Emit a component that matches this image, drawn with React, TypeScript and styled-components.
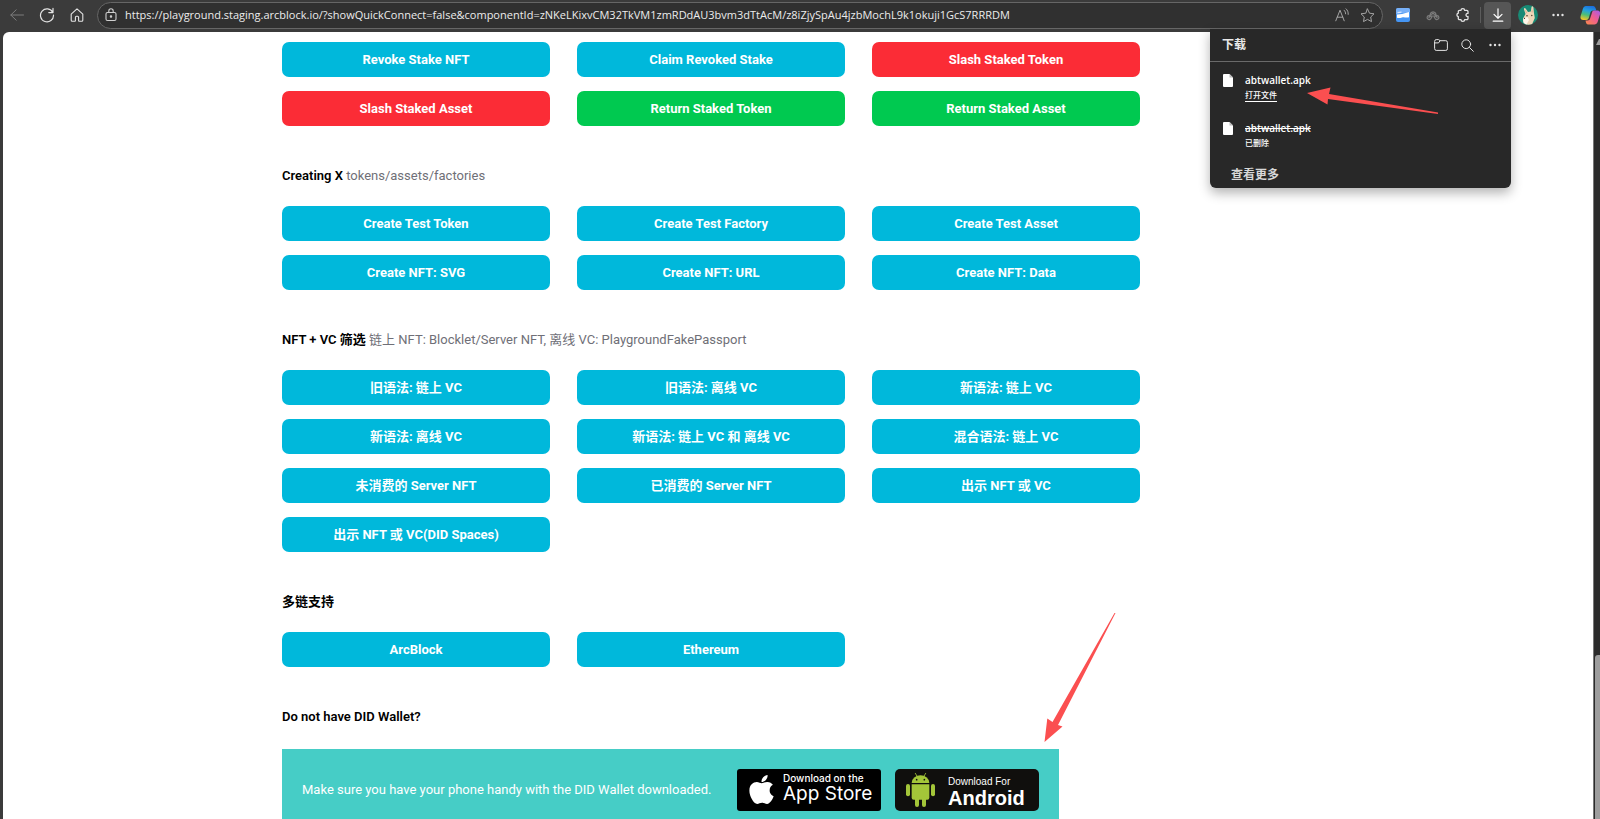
import React from "react";
import styled, { createGlobalStyle } from "styled-components";
import { FaApple } from "react-icons/fa";

const PageStyle = createGlobalStyle`
  *, *::before, *::after { box-sizing: border-box; }
  html, body { margin: 0; padding: 0; }
  body {
    font-family: Roboto, "Noto Sans CJK SC", sans-serif;
    font-size: 13px;
    background: #3b3b3b;
  }
  button, input { font-family: inherit; }
`;

const Browser = styled.div`
  position: relative;
  height: 100vh;
  display: flex;
  flex-direction: column;
  overflow: hidden;
  background: #3b3b3b;
`;

/* ---------- toolbar ---------- */

const Toolbar = styled.header`
  display: flex;
  align-items: center;
  flex: none;
  height: 32px;
  padding: 0 0 2px 2px;
`;

const ToolButton = styled.button<{ $dim?: boolean }>`
  flex: none;
  display: flex;
  align-items: center;
  justify-content: center;
  width: 30px;
  height: 28px;
  padding: 0;
  border: 0;
  background: none;
  color: ${(p) => (p.$dim ? "#7c7c7c" : "#e4e4e4")};
`;

const DownloadButton = styled(ToolButton)`
  width: 27px;
  height: 27px;
  margin: 0 2px 0 3px;
  border-radius: 4px;
  background: #565656;
  color: #fff;
`;

const EdgeButton = styled(ToolButton)`
  width: 27px;
  padding-left: 7px;
  justify-content: flex-start;
  overflow: hidden;
`;

const Separator = styled.span`
  flex: none;
  width: 1px;
  height: 16px;
  margin-left: 2px;
  background: #5c5c5c;
`;

const AddressBar = styled.div`
  flex: 1;
  min-width: 0;
  display: flex;
  align-items: center;
  height: 27px;
  margin: 0 5px;
  padding: 0 8px 0 6px;
  border: 1px solid #666;
  border-radius: 14px;
  background: #303030;
  color: #d0d0d0;
`;

const AddressIcon = styled.button`
  flex: none;
  display: flex;
  align-items: center;
  justify-content: center;
  width: 13px;
  height: 20px;
  padding: 0;
  border: 0;
  background: none;
  color: inherit;
`;

const AddressActions = styled.div`
  display: flex;
  gap: 13px;
  color: #a4a4a4;
`;

const AddressInput = styled.input`
  flex: 1;
  min-width: 0;
  margin: 0 8px;
  padding: 0;
  border: 0;
  outline: 0;
  background: none;
  color: #ececec;
  font-family: "Open Sans", sans-serif;
  font-size: 11px;
  line-height: 20px;
`;

/* ---------- page area ---------- */

const Frame = styled.div`
  flex: 1;
  min-height: 0;
  display: flex;
  padding-left: 3px;
`;

const Page = styled.main`
  flex: 1;
  min-width: 0;
  overflow: hidden;
  padding: 10px 24px 0 279px;
  border-top-left-radius: 6px;
  background: #fff;
`;

const Content = styled.div`
  max-width: 858px;
`;

const ScrollTrack = styled.div`
  flex: none;
  display: flex;
  flex-direction: column;
  align-items: flex-end;
  justify-content: space-between;
  width: 7px;
  padding-top: 7px;
  border-left: 1px solid #777;
  background: #2b2b2b;
`;

const ScrollThumb = styled.div`
  width: 5px;
  height: 21%;
  border-top-left-radius: 3px;
  background: #9d9d9d;
`;

const Heading = styled.h2`
  margin: 0;
  padding: 38px 0 18px;
  font-size: 13px;
  line-height: 24px;
  font-weight: 600;
  color: #000;
`;

const Hint = styled.span`
  font-weight: 400;
  color: #6f6f77;
`;

const ActionGrid = styled.div`
  display: grid;
  grid-template-columns: repeat(3, minmax(0, 1fr));
  gap: 14px 27px;
`;

type Tone = "cyan" | "red" | "green";
const tones: Record<Tone, string> = {
  cyan: "#00b8db",
  red: "#fb2c36",
  green: "#00c950",
};

const Action = styled.button<{ $tone: Tone }>`
  height: 35px;
  padding: 0 8px;
  border: 0;
  border-radius: 7px;
  background: ${(p) => tones[p.$tone]};
  color: #fff;
  font-size: 13px;
  line-height: 20px;
  font-weight: 700;
`;

const Banner = styled.div`
  display: flex;
  align-items: center;
  justify-content: space-between;
  max-width: 777px;
  height: 81px;
  margin-top: 2px;
  padding: 0 20px;
  background: #46cdc6;
  color: #fff;
  font-size: 13px;
  white-space: nowrap;
`;

const Stores = styled.div`
  display: flex;
  gap: 14px;
`;

const Badge = styled.a<{ $android?: boolean }>`
  display: flex;
  align-items: center;
  flex: none;
  width: 144px;
  height: 42px;
  padding-left: ${(p) => (p.$android ? 11 : 8)}px;
  border-radius: ${(p) => (p.$android ? 5 : 3)}px;
  background: ${(p) => (p.$android ? "#100f0d" : "#000")};
  color: #fff;
  text-decoration: none;
`;

const BadgeText = styled.span<{ $android?: boolean }>`
  display: flex;
  flex-direction: column;
  margin-left: ${(p) => (p.$android ? 13 : 5)}px;
  padding: ${(p) => (p.$android ? "4px 0 0" : "0 0 4px")};
  font-family: ${(p) => (p.$android ? '"Liberation Sans"' : "Inter")}, sans-serif;
  font-weight: ${(p) => (p.$android ? 400 : 500)};
  font-size: 10px;
  line-height: 12px;
`;

const BadgeName = styled.span<{ $android?: boolean }>`
  font-size: ${(p) => (p.$android ? 20 : 19)}px;
  line-height: 20px;
  font-weight: ${(p) => (p.$android ? 700 : 400)};
`;

/* ---------- downloads panel ---------- */

const Panel = styled.aside`
  position: absolute;
  top: 29px;
  right: 89px;
  width: 301px;
  border-radius: 0 0 6px 6px;
  background: #282828;
  color: #fff;
  box-shadow: 0 5px 12px rgba(0, 0, 0, 0.3);
  font-family: "Open Sans", "Noto Sans CJK SC", sans-serif;
`;

const PanelHeader = styled.div`
  display: flex;
  align-items: center;
  height: 33px;
  padding: 0 3px 0 12px;
  border-bottom: 1px solid #6a6a6a;
`;

const PanelTitle = styled.h3`
  flex: 1;
  margin: 0;
  font-size: 12px;
  line-height: 16px;
  font-weight: 700;
  color: #e8e8e8;
`;

const PanelTool = styled(ToolButton)`
  width: 27px;
`;

const Files = styled.ul`
  list-style: none;
  display: flex;
  flex-direction: column;
  gap: 20px;
  margin: 0;
  padding: 11px 0 0 13px;
`;

const File = styled.li`
  display: flex;
  gap: 12px;
  height: 28px;
`;

const FileName = styled.div<{ $gone?: boolean }>`
  font-size: 10px;
  line-height: 15px;
  font-weight: 600;
  text-decoration: ${(p) => (p.$gone ? "line-through" : "none")};
`;

const FileNote = styled.div`
  font-size: 8px;
  line-height: 13px;
  font-weight: 500;
`;

const OpenFile = styled.a`
  display: block;
  width: fit-content;
  border-bottom: 1px solid #fff;
  color: inherit;
  font-size: 8px;
  line-height: 13px;
  font-weight: 500;
  text-decoration: none;
`;

const FileGlyph = styled.svg`
  flex: none;
  margin-top: 1px;
`;

const SeeMore = styled.button`
  display: block;
  margin: 17px 0 0 21px;
  padding: 0 0 4px;
  border: 0;
  background: none;
  color: #d8d8d8;
  font-size: 12px;
  line-height: 18px;
  font-weight: 700;
`;

/* ---------- annotation arrows ---------- */

const Arrow = styled.svg<{ $x: number; $y: number }>`
  position: absolute;
  left: ${(p) => p.$x}px;
  top: ${(p) => p.$y}px;
  pointer-events: none;
  fill: #fb4f50;
`;

/* ---------- icons ---------- */

const Line = styled.svg`
  display: block;
  flex: none;
  fill: none;
  stroke: currentColor;
  stroke-linecap: round;
  stroke-linejoin: round;
`;

const BackIcon = () => (
  <Line width="14" height="14" viewBox="0 0 14 14"><path d="M13.5 7H.8M6.2 1.8L.8 7l5.4 5.2" /></Line>
);
const ReloadIcon = () => (
  <Line width="16" height="16" viewBox="0 0 16 16" strokeWidth="1.2">
    <path d="M13.8 5.4A6.5 6.5 0 1 0 14.5 8M14 1.4v4.2H9.8" />
  </Line>
);
const HomeIcon = () => (
  <Line width="14" height="14" viewBox="0 0 14 14" strokeWidth="1.1">
    <path d="M1.2 6.1L7 .9l5.8 5.2v6.1a1 1 0 0 1-1 1H9.2a.6.6 0 0 1-.6-.6V9.4c0-.7-.5-1.1-1.1-1.1h-1c-.6 0-1.1.4-1.1 1.1v3.2a.6.6 0 0 1-.6.6H2.2a1 1 0 0 1-1-1z" />
  </Line>
);
const LockIcon = () => (
  <Line width="12" height="14" viewBox="0 0 12 14" strokeWidth="1.1">
    <rect x="1" y="4.5" width="10" height="8" rx="1.5" />
    <path d="M3.8 4.3V3a2.2 2.2 0 0 1 4.4 0v1.3" />
    <circle cx="6" cy="8.5" r=".7" fill="currentColor" />
  </Line>
);
const ReadAloudIcon = () => (
  <Line width="14" height="14" viewBox="0 0 14 14">
    <path d="M.8 12.8L5 2.2l4.2 10.6M2.2 9.2h5.6M9 2.2c1.2 1 1.6 2.2 1.6 3.6M11 .8c1.7 1.5 2.3 3.2 2.2 5.6" />
  </Line>
);
const StarIcon = () => (
  <Line width="15" height="15" viewBox="0 0 15 15">
    <path d="M7.5 1l2 4.2 4.5.6-3.3 3.2.8 4.6-4-2.2-4 2.2.8-4.6L1 5.8l4.5-.6z" />
  </Line>
);
const CardIcon = () => (
  <svg width="14" height="14" viewBox="0 0 14 14">
    <rect width="14" height="14" rx="2" fill="#4595f3" />
    <path d="M0 2a2 2 0 0 1 2-2h10a2 2 0 0 1 2 2v2L0 6z" fill="#78b0f7" />
    <path d="M1 6.6l5-.6 7-2v5.2c-3 .8-5-.6-7 .2-2 .7-3.500.7-5 .4z" fill="#fff" />
    <path d="M1.500 4.600l4-.5" stroke="#d9e8ff" strokeWidth="1.2" />
  </svg>
);
const KnotIcon = () => (
  <Line width="14" height="11" viewBox="0 0 14 11" strokeWidth="1.2">
    <path d="M4.200 4.200A3 3 0 0 1 10 4.200M5.800 5.200a1.300 1.300 0 1 1 2.400 0" />
    <path d="M6.200 6.200L4.800 8.600a2 2 0 1 1-2.200-3c.9-.3 1.700 0 2.200.8M2.900 7.600l1.900-3.200" />
    <path d="M7.800 6.200l1.400 2.400a2 2 0 1 0 2.200-3c-.9-.3-1.700 0-2.200.8M11.100 7.600L9.200 4.400" />
  </Line>
);
const PuzzleIcon = () => (
  <Line width="14" height="14" viewBox="0 0 14 14" strokeWidth="1.3">
    <path d="M5 2.300a1.800 1.600 0 0 1 3.600 0h2.200a1.200 1.200 0 0 1 1.200 1.200v1.900a1.600 1.600 0 1 0 0 3.100v2a1.200 1.200 0 0 1-1.200 1.200H8.600a1.800 1.600 0 0 1-3.600 0H3.500a1.200 1.200 0 0 1-1.200-1.200V8.700a1.800 1.800 0 0 1 0-3.500V3.500a1.200 1.200 0 0 1 1.200-1.200z" />
  </Line>
);
const DownloadIcon = () => (
  <Line width="12" height="14" viewBox="0 0 12 14" strokeWidth="1.2"><path d="M6 .8v9.400M2 6.400l4 3.900 4-3.900M1.200 13.200h9.600" /></Line>
);
const DotsIcon = () => (
  <svg width="12" height="4" viewBox="0 0 12 4" fill="currentColor">
    <circle cx="1.5" cy="2" r="1.2" /><circle cx="6" cy="2" r="1.2" /><circle cx="10.5" cy="2" r="1.2" />
  </svg>
);
const FolderIcon = () => (
  <Line width="14" height="12" viewBox="0 0 14 12">
    <path d="M.6 2.2A1.6 1.6 0 0 1 2.200.6h2.300l1.600 1.100h5.700a1.600 1.600 0 0 1 1.600 1.600v6.500a1.600 1.600 0 0 1-1.600 1.600H2.200A1.600 1.600 0 0 1 .6 9.800zM.6 3.900h3.900l1.600-2.200" />
  </Line>
);
const SearchIcon = () => (
  <Line width="13" height="13" viewBox="0 0 13 13"><circle cx="5.2" cy="5.2" r="4.4" /><path d="M8.5 8.5l3.800 3.800" /></Line>
);
const AvatarIcon = () => (
  <svg width="20" height="20" viewBox="0 0 20 20">
    <circle cx="10" cy="10" r="10" fill="#188a75" />
    <path d="M7.500 9L6 4.500C5.800 2.800 6.800 2.400 7.600 3.500L10 7l2.800-.6L13.500 2c.4-1.200 1.600-1 1.900.3l.6 6 .8 4.700-2.600 5.900a10 10 0 0 1-7.200.2L5 16l.5-3.500z" fill="#efd6b8" />
    <path d="M5.200 13.200L9.500 12l1.500 3-2.500 4.600-3-1.600z" fill="#fff6ea" />
    <path d="M14 3.500l.8 4-1.300-.3zM7 4.300L9 7.600l-1 .6z" fill="#d9a98c" />
    <circle cx="9" cy="10.800" r=".8" fill="#4d3a2c" /><circle cx="13.800" cy="10.500" r=".7" fill="#4d3a2c" />
    <circle cx="6.500" cy="13.400" r=".6" fill="#4d3a2c" />
  </svg>
);
const CopilotIcon = () => (
  <svg width="20" height="20" viewBox="0 0 20 20" style={{ flex: "none" }}>
    <defs>
      <linearGradient id="coolSide" x1="0.6" y1="0" x2="0.3" y2="1">
        <stop offset="0" stopColor="#1b6fe0" /><stop offset=".35" stopColor="#23a3e0" /><stop offset=".65" stopColor="#4cbf77" /><stop offset="1" stopColor="#f2c628" />
      </linearGradient>
      <linearGradient id="warmSide" x1="1" y1="0" x2="0" y2="1">
        <stop offset="0" stopColor="#a45bea" /><stop offset=".45" stopColor="#ef5c93" /><stop offset="1" stopColor="#fb8a48" />
      </linearGradient>
    </defs>
    <path d="M6 1h7c1.5 0 2.2 1 2.7 2.5l.6 2H13c-1.5 0-2.3.8-2.7 2.2L8.800 13c-.4 1.300-1.200 2-2.600 2H3.500C1 15 0 13.500.6 11L3 3.500C3.500 2 4.500 1 6 1z" fill="url(#coolSide)" />
    <path d="M14 5.500h3c2.500 0 3.500 1.500 3 4L17.600 17c-.5 1.500-1.600 2.500-3.200 2.500H8.200C6.500 19.500 6 18 5.500 15.500h2c1.500 0 2.300-.8 2.700-2.200L12 7.700c.4-1.400.8-2.200 2-2.200z" fill="url(#warmSide)" />
  </svg>
);
const AndroidRobot = () => (
  <svg width="29" height="34" viewBox="0 0 87 102" fill="#a4c639">
    <path d="M17 30a26.500 23 0 0 1 53 0z" />
    <path d="M28 1l7 12M59 1l-7 12" stroke="#a4c639" strokeWidth="2.5" strokeLinecap="round" />
    <circle cx="32" cy="20" r="2.500" fill="#111" /><circle cx="55" cy="20" r="2.500" fill="#111" />
    <path d="M17 34h53v40a6 6 0 0 1-6 6H23a6 6 0 0 1-6-6z" />
    <rect x="0" y="33" width="12" height="37" rx="6" /><rect x="75" y="33" width="12" height="37" rx="6" />
    <rect x="27" y="68" width="12" height="34" rx="6" /><rect x="48" y="68" width="12" height="34" rx="6" />
  </svg>
);
const FileIcon = () => (
  <FileGlyph width="10" height="13" viewBox="0 0 10 13">
    <path d="M1 0h5.500L10 3.500V12a1 1 0 0 1-1 1H1a1 1 0 0 1-1-1V1a1 1 0 0 1 1-1z" fill="#fff" />
    <path d="M6.500 0v3.500H10" fill="#bbb" />
  </FileGlyph>
);

/* ---------- data ---------- */

type Entry = [string, Tone?];
const sections: { title?: string; hint?: string; actions: Entry[] }[] = [
  {
    actions: [
      ["Revoke Stake NFT"], ["Claim Revoked Stake"], ["Slash Staked Token", "red"],
      ["Slash Staked Asset", "red"], ["Return Staked Token", "green"], ["Return Staked Asset", "green"],
    ],
  },
  {
    title: "Creating X",
    hint: "tokens/assets/factories",
    actions: [
      ["Create Test Token"], ["Create Test Factory"], ["Create Test Asset"],
      ["Create NFT: SVG"], ["Create NFT: URL"], ["Create NFT: Data"],
    ],
  },
  {
    title: "NFT + VC 筛选",
    hint: "链上 NFT: Blocklet/Server NFT, 离线 VC: PlaygroundFakePassport",
    actions: [
      ["旧语法: 链上 VC"], ["旧语法: 离线 VC"], ["新语法: 链上 VC"],
      ["新语法: 离线 VC"], ["新语法: 链上 VC 和 离线 VC"], ["混合语法: 链上 VC"],
      ["未消费的 Server NFT"], ["已消费的 Server NFT"], ["出示 NFT 或 VC"],
      ["出示 NFT 或 VC(DID Spaces)"],
    ],
  },
  { title: "多链支持", actions: [["ArcBlock"], ["Ethereum"]] },
];

const address =
  "https://playground.staging.arcblock.io/?showQuickConnect=false&componentId=zNKeLKixvCM32TkVM1zmRDdAU3bvm3dTtAcM/z8iZjySpAu4jzbMochL9k1okuji1GcS7RRRDM";

export default function App() {
  return (
    <>
      <PageStyle />
      <Browser>
        <Toolbar>
          <ToolButton $dim aria-label="Back"><BackIcon /></ToolButton>
          <ToolButton aria-label="Reload"><ReloadIcon /></ToolButton>
          <ToolButton aria-label="Home"><HomeIcon /></ToolButton>
          <AddressBar>
            <AddressIcon aria-label="Site information"><LockIcon /></AddressIcon>
            <AddressInput aria-label="Address" defaultValue={address} spellCheck={false} />
            <AddressActions>
              <AddressIcon aria-label="Read aloud"><ReadAloudIcon /></AddressIcon>
              <AddressIcon aria-label="Add to favourites"><StarIcon /></AddressIcon>
            </AddressActions>
          </AddressBar>
          <ToolButton aria-label="Card extension"><CardIcon /></ToolButton>
          <ToolButton $dim aria-label="Knot extension"><KnotIcon /></ToolButton>
          <ToolButton aria-label="Extensions"><PuzzleIcon /></ToolButton>
          <Separator />
          <DownloadButton aria-label="Downloads"><DownloadIcon /></DownloadButton>
          <ToolButton aria-label="Profile"><AvatarIcon /></ToolButton>
          <ToolButton aria-label="Settings and more"><DotsIcon /></ToolButton>
          <EdgeButton aria-label="Copilot"><CopilotIcon /></EdgeButton>
        </Toolbar>

        <Frame>
          <Page>
            <Content>
              {sections.map((section, i) => (
                <section key={i}>
                  {section.title && (
                    <Heading>
                      {section.title} {section.hint && <Hint>{section.hint}</Hint>}
                    </Heading>
                  )}
                  <ActionGrid>
                    {section.actions.map(([label, tone = "cyan"]) => (
                      <Action key={label} $tone={tone}>{label}</Action>
                    ))}
                  </ActionGrid>
                </section>
              ))}
              <section>
                <Heading>Do not have DID Wallet?</Heading>
                <Banner>
                  <span>Make sure you have your phone handy with the DID Wallet downloaded.</span>
                  <Stores>
                    <Badge href="#ios">
                      <FaApple size={33} />
                      <BadgeText>
                        Download on the
                        <BadgeName>App Store</BadgeName>
                      </BadgeText>
                    </Badge>
                    <Badge href="#android" $android>
                      <AndroidRobot />
                      <BadgeText $android>
                        Download For
                        <BadgeName $android>Android</BadgeName>
                      </BadgeText>
                    </Badge>
                  </Stores>
                </Banner>
              </section>
            </Content>
          </Page>
          <ScrollTrack>
            <svg width="4" height="6" viewBox="0 0 4 6"><path d="M0 6L3 0h1v6z" fill="#9d9d9d" /></svg>
            <ScrollThumb />
          </ScrollTrack>
        </Frame>

        <Panel aria-label="下载">
          <PanelHeader>
            <PanelTitle>下载</PanelTitle>
            <PanelTool aria-label="Open downloads folder"><FolderIcon /></PanelTool>
            <PanelTool aria-label="Search downloads"><SearchIcon /></PanelTool>
            <PanelTool aria-label="More options"><DotsIcon /></PanelTool>
          </PanelHeader>
          <Files>
            <File>
              <FileIcon />
              <div>
                <FileName>abtwallet.apk</FileName>
                <OpenFile href="#open">打开文件</OpenFile>
              </div>
            </File>
            <File>
              <FileIcon />
              <div>
                <FileName $gone>abtwallet.apk</FileName>
                <FileNote>已删除</FileNote>
              </div>
            </File>
          </Files>
          <SeeMore>查看更多</SeeMore>
        </Panel>

        <Arrow $x={1307} $y={87} width="132" height="28" viewBox="0 0 132 28">
          <path d="M0 6L23.500.5 22 7 131 25.500v1.500L21 12 20.500 17.500z" />
        </Arrow>
        <Arrow $x={1044} $y={613} width="72" height="130" viewBox="0 0 72 130">
          <path d="M.5 129L3.300 105.500 8.500 109 70.500 0h1L14 112l4.500 1.500z" />
        </Arrow>
      </Browser>
    </>
  );
}
